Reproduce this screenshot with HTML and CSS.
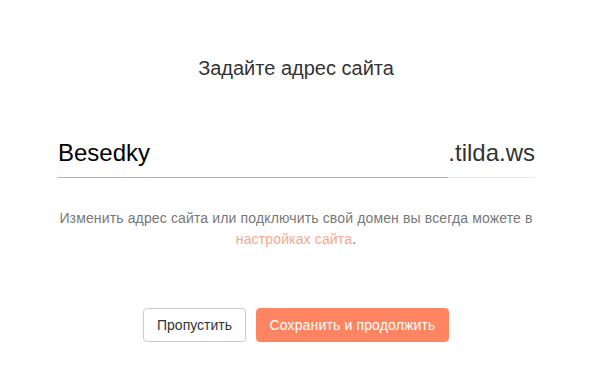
FILE: index.html
```html
<!DOCTYPE html>
<html lang="ru">
<head>
<meta charset="utf-8">
<title>Задайте адрес сайта</title>
<link rel="stylesheet" href="styles.css">
</head>
<body>
<div class="wrap">
  <h1 class="title">Задайте адрес сайта</h1>
  <div class="domain">
    <div class="field">Besedky</div>
    <div class="suffix">.tilda.ws</div>
  </div>
  <p class="note">Изменить адрес сайта или подключить свой домен вы всегда можете в <a class="link" href="#">настройках сайта</a>.</p>
  <div class="actions">
    <button class="btn btn-skip">Пропустить</button>
    <button class="btn btn-save">Сохранить и продолжить</button>
  </div>
</div>
</body>
</html>
```
FILE: styles.css
```css
html, body {
  margin: 0;
  padding: 0;
  background: #ffffff;
}
body {
  font-family: "Liberation Sans", Arial, sans-serif;
}
.wrap {
  width: 478px;
  margin: 0 auto;
  padding-top: 56px;
  display: flex;
  flex-direction: column;
}
.title {
  margin: 0;
  font-size: 20px;
  line-height: 24px;
  font-weight: normal;
  color: #333333;
  text-align: center;
}
.domain {
  margin-top: 58px;
  display: flex;
  align-items: stretch;
}
.field {
  flex: 1;
  font-size: 24px;
  line-height: 30px;
  color: #000000;
  padding: 0 0 9px 1px;
  border-bottom: 1px solid #b5b5b5;
}
.suffix {
  font-size: 24px;
  line-height: 30px;
  color: #333333;
  padding-bottom: 9px;
  border-bottom: 1px solid #e8e8e8;
}
.note {
  margin: 30px 0 0;
  font-size: 14px;
  line-height: 21px;
  letter-spacing: 0.14px;
  color: #777777;
  text-align: center;
}
.link {
  color: #fba68b;
  text-decoration: none;
}
.actions {
  margin-top: 58px;
  display: flex;
  justify-content: center;
  gap: 10px;
}
.btn {
  font-family: "Liberation Sans", Arial, sans-serif;
  font-size: 14px;
  height: 34px;
  border-radius: 4px;
  padding: 0;
  cursor: pointer;
}
.btn-skip {
  width: 103px;
  background: #ffffff;
  color: #333333;
  border: 1px solid #cccccc;
}
.btn-save {
  width: 193px;
  background: #ff8562;
  color: #ffffff;
  border: 1px solid #ff8562;
  letter-spacing: 0.15px;
}
```
